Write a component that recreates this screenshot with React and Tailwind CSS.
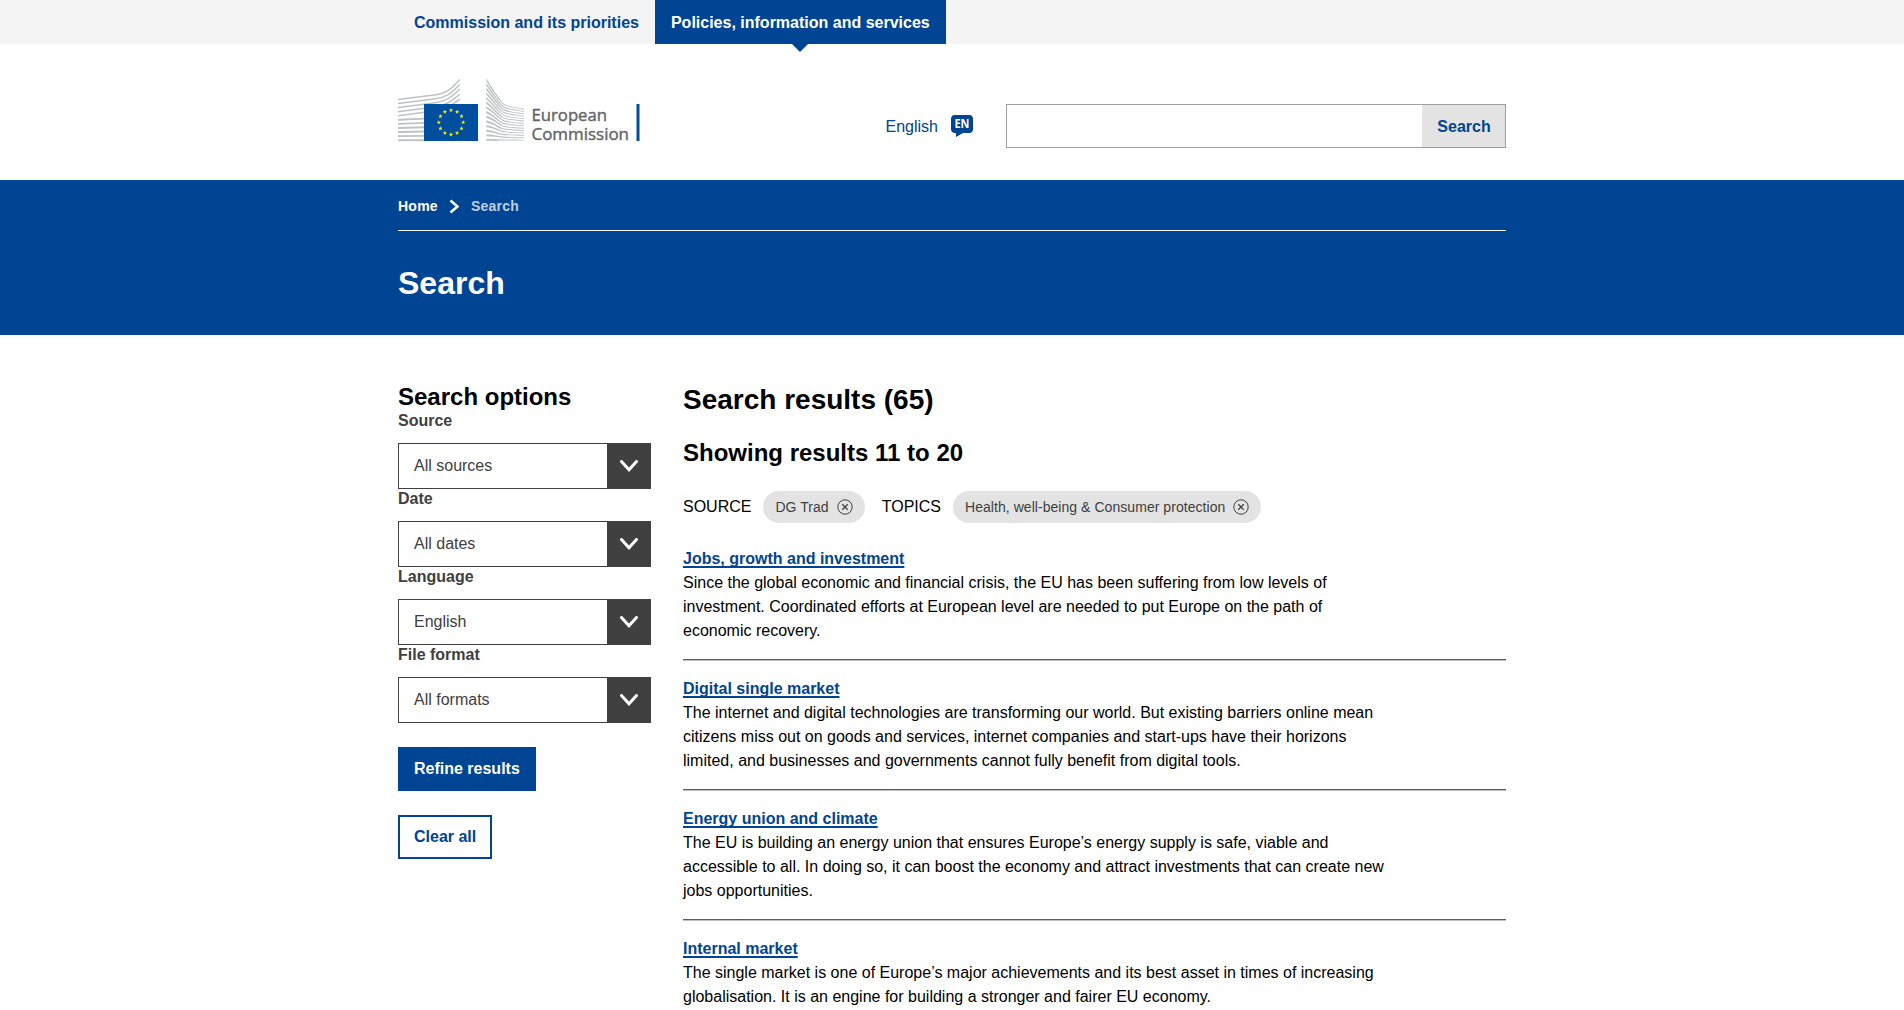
const BLUE_LINK = "text-[#004494]";

const results = [
  {
    title: "Jobs, growth and investment",
    lines: [
      "Since the global economic and financial crisis, the EU has been suffering from low levels of",
      "investment. Coordinated efforts at European level are needed to put Europe on the path of",
      "economic recovery.",
    ],
  },
  {
    title: "Digital single market",
    lines: [
      "The internet and digital technologies are transforming our world. But existing barriers online mean",
      "citizens miss out on goods and services, internet companies and start-ups have their horizons",
      "limited, and businesses and governments cannot fully benefit from digital tools.",
    ],
  },
  {
    title: "Energy union and climate",
    lines: [
      "The EU is building an energy union that ensures Europe’s energy supply is safe, viable and",
      "accessible to all. In doing so, it can boost the economy and attract investments that can create new",
      "jobs opportunities.",
    ],
  },
  {
    title: "Internal market",
    lines: [
      "The single market is one of Europe’s major achievements and its best asset in times of increasing",
      "globalisation. It is an engine for building a stronger and fairer EU economy.",
    ],
  },
];

const filters = [
  { label: "Source", value: "All sources" },
  { label: "Date", value: "All dates" },
  { label: "Language", value: "English" },
  { label: "File format", value: "All formats" },
];

const STAR = "M0,-2.3 L0.55,-0.75 L2.2,-0.72 L0.9,0.28 L1.36,1.86 L0,0.95 L-1.36,1.86 L-0.9,0.28 L-2.2,-0.72 L-0.55,-0.75 Z";

const mix = (a, b, t) => a + (b - a) * t;
const steps = (n) => Array.from({ length: n }, (_, i) => i);

// One tapering band of the right wing: thick at the left edge, thin at the right.
function wingBand(t) {
  const y0 = mix(0.2, 61, t);
  const knee = mix(25, 61.4, t);
  const y1 = mix(30.6, 61.7, t);
  const w = mix(2.6, 1.9, t);
  return `M88.3,${y0} C${mix(94, 100, t)},${mix(9.5, 61.1, t)} 99,${mix(18, 61.2, t)} 105,${knee} C109,${mix(28, 61.5, t)} 116,${mix(29, 61.6, t)} 126,${y1}
    V${y1 + 0.9} C116,${mix(29.9, 62.5, t)} 109,${mix(29, 62.5, t)} 104.800,${knee + 1.100} C98.500,${mix(19.8, 62.6, t)} ${mix(93.5, 100, t)},${mix(11.5, 62.8, t)} 88.3,${y0 + w} Z`;
}

function Logo() {
  return (
    <svg width="244" height="66" viewBox="0 0 244 66" className="block">
      <g fill="none" stroke="#bfc1c3">
        {steps(11).map((i) => {
          const y = 21.4 + i * 4.08;
          const k = 16.7 + i * 4;
          return i < 5 ? (
            <path
              key={i}
              strokeWidth="1.5"
              d={`M0,${y} L36,${k + 0.4} C47,${k - 0.8} 53,${k - 5} 61.700,${1.5 + i * 4.9}`}
            />
          ) : (
            <path key={i} strokeWidth="1.9" d={`M0,${y} L27,${y - 2.4 + i * 0.24}`} />
          );
        })}
      </g>
      <g fill="#bfc1c3">
        {steps(14).map((i) => (
          <path key={i} d={wingBand(i / 13)} />
        ))}
      </g>
      <rect x="26" y="26" width="54" height="37" fill="#004f9f" />
      <g fill="#ffed00">
        {steps(12).map((i) => {
          const a = (i * Math.PI) / 6;
          return (
            <path
              key={i}
              d={STAR}
              transform={`translate(${53 + 12.2 * Math.sin(a)} ${44.4 - 12.2 * Math.cos(a)})`}
            />
          );
        })}
      </g>
      <g fill="#646568" stroke="#646568" strokeWidth="0.4" fontFamily="'Open Sans', sans-serif" fontSize="16.500">
        <text x="133.500" y="42.700" textLength="75.500" lengthAdjust="spacingAndGlyphs">European</text>
        <text x="133.500" y="61.700" textLength="97.500" lengthAdjust="spacingAndGlyphs">Commission</text>
      </g>
      <rect x="238.500" y="26" width="3" height="37" fill="#004f9f" />
    </svg>
  );
}

function Select({ label, value }) {
  return (
    <div>
      <div className="h-[32px] text-[16px] leading-[20px] font-bold text-[#404040]">{label}</div>
      <div className="flex h-[46px] border border-[#404040]">
        <div className="flex flex-1 items-center pl-[15px] text-[16px] text-[#404040]">{value}</div>
        <div className="flex w-[43px] items-center justify-center bg-[#404040]">
          <svg width="18" height="12" viewBox="0 0 18 12" fill="none" stroke="#fff" strokeWidth="3">
            <path d="M1.500 1.500 L9 9.700 L16.500 1.500" strokeLinecap="round" />
          </svg>
        </div>
      </div>
    </div>
  );
}

function Tag({ children }) {
  return (
    <span className="flex h-[32px] items-center gap-[8px] rounded-full bg-[#e3e3e3] pr-[12px] pl-[12px] text-[14px] tracking-[0.05px] text-[#404040]">
      {children}
      <svg width="16" height="16" viewBox="0 0 16 16" fill="none" stroke="#404040">
        <circle cx="8" cy="8" r="7.200" />
        <path d="M5.300 5.300 L10.700 10.700 M10.700 5.300 L5.300 10.700" strokeWidth="1.300" />
      </svg>
    </span>
  );
}

export default function App() {
  return (
    <div className="h-[1010px] overflow-hidden bg-white font-['Liberation_Sans',Arial,sans-serif] text-[16px] text-black">
      <div className="h-[44px] bg-[#f4f4f4]">
        <div className="mx-auto flex h-full w-[1108px] font-bold">
          <a className={`flex items-center px-[16px] pt-[2px] ${BLUE_LINK}`}>Commission and its priorities</a>
          <a className="relative flex items-center bg-[#004494] px-[16px] pt-[2px] text-white">
            Policies, information and services
            <svg className="absolute top-full left-1/2 -ml-[8px]" width="16" height="8">
              <path d="M0 0 H16 L8 8 Z" fill="#004494" />
            </svg>
          </a>
        </div>
      </div>

      <header className="mx-auto flex h-[136px] w-[1108px]">
        <div className="pt-[34px]">
          <Logo />
        </div>
        <div className="mt-[60px] ml-auto flex h-[44px] items-center">
          <a className={`mr-[13px] pt-[2px] ${BLUE_LINK}`}>English</a>
          <svg className="mr-[33px]" width="22" height="22" viewBox="0 0 22 22">
            <path d="M4 0 H18 Q22 0 22 4 V14 Q22 18 18 18 H12 L5 22 V18 H4 Q0 18 0 14 V4 Q0 0 4 0 Z" fill="#004494" />
            <text x="3.500" y="12.700" textLength="15" lengthAdjust="spacingAndGlyphs" fill="#fff" fontSize="12" fontWeight="700" fontFamily="'Open Sans', sans-serif">EN</text>
          </svg>
          <div className="flex h-[44px] w-[500px] border border-[#9f9f9f]">
            <div className="flex-1" />
            <button className={`w-[83px] bg-[#e3e3e3] pt-[2px] pl-[1px] font-bold ${BLUE_LINK}`}>Search</button>
          </div>
        </div>
      </header>

      <div className="h-[155px] bg-[#004494] text-white">
        <div className="mx-auto w-[1108px]">
          <div className="flex h-[51px] items-center border-b border-white pt-[2px] text-[14px] font-bold tracking-[0.25px]">
            <span>Home</span>
            <svg className="mr-[11px] ml-[11px]" width="11" height="15" viewBox="0 0 11 15" fill="none" stroke="#fff" strokeWidth="2.500">
              <path d="M1.500 1.500 L8.500 7.500 L1.500 13.500" />
            </svg>
            <span className="text-[#bfd0e4]">Search</span>
          </div>
          <h1 className="mt-[32px] text-[32px] leading-[40px] font-bold">Search</h1>
        </div>
      </div>

      <main className="mx-auto flex w-[1108px] gap-[32px] pt-[48px]">
        <aside className="w-[253px]">
          <h2 className="text-[24px] leading-[28px] font-bold">Search options</h2>
          {filters.map((f) => (
            <Select key={f.label} {...f} />
          ))}
          <button className="mt-[24px] block h-[44px] bg-[#004494] px-[16px] font-bold text-white">Refine results</button>
          <button className={`mt-[24px] block h-[44px] border-2 border-[#004494] px-[14px] font-bold ${BLUE_LINK}`}>Clear all</button>
        </aside>
        <section className="w-[823px]">
          <h2 className="pt-[1px] text-[28px] leading-[32px] font-bold">Search results (65)</h2>
          <h3 className="mt-[23px] text-[24px] leading-[28px] font-bold">Showing results 11 to 20</h3>
          <div className="mt-[24px] flex h-[32px] items-center">
            <span className="mr-[12px]">SOURCE</span>
            <Tag>DG Trad</Tag>
            <span className="mr-[12px] ml-[17px]">TOPICS</span>
            <Tag>Health, well-being &amp; Consumer protection</Tag>
          </div>
          <ul className="mt-[23px]">
            {results.map((r) => (
              <li key={r.title} className="mb-[16px] h-[114px] border-b border-[#5c5c5c] pt-[1px] leading-[24px] shadow-[0_1px_0_#bfbfbf]">
                <a className={`font-bold underline decoration-2 underline-offset-2 [text-decoration-skip-ink:none] ${BLUE_LINK}`}>{r.title}</a>
                {r.lines.map((l) => (
                  <p key={l} className="whitespace-nowrap">{l}</p>
                ))}
              </li>
            ))}
          </ul>
        </section>
      </main>
    </div>
  );
}
